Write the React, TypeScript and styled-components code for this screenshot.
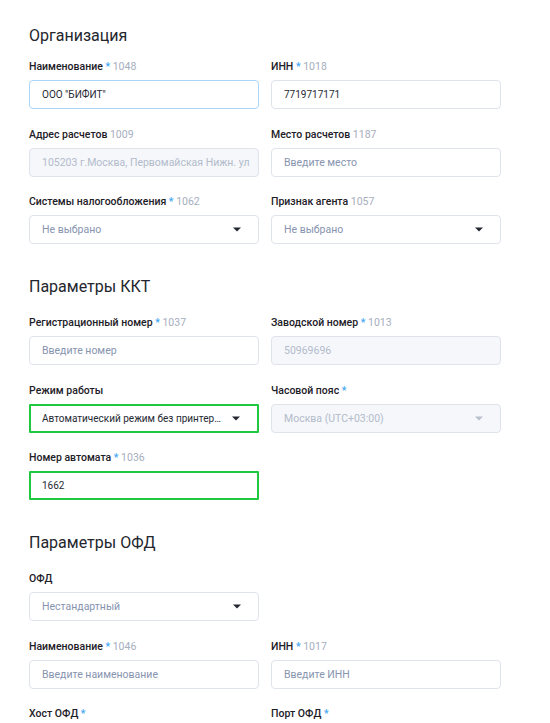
import styled, { createGlobalStyle, css } from "styled-components"

const GlobalStyle = createGlobalStyle`
  html, body {
    margin: 0;
    padding: 0;
    background: #ffffff;
  }

  body {
    font-family: Roboto, "Noto Sans", "Liberation Sans", sans-serif;
    color: #262a33;
    -webkit-font-smoothing: antialiased;
  }

  * {
    box-sizing: border-box;
  }
`

type FieldKind = "input" | "select"

interface FieldDef {
  label: string
  required?: boolean
  code?: string
  kind?: FieldKind
  value?: string
  placeholder?: string
  disabled?: boolean
  focused?: boolean
  highlighted?: boolean
}

interface SectionDef {
  title: string
  rows: FieldDef[][]
}

const sections: SectionDef[] = [
  {
    title: "Организация",
    rows: [
      [
        { label: "Наименование", required: true, code: "1048", value: 'ООО "БИФИТ"', focused: true },
        { label: "ИНН", required: true, code: "1018", value: "7719717171" },
      ],
      [
        {
          label: "Адрес расчетов",
          code: "1009",
          placeholder: "105203 г.Москва, Первомайская Нижн. ул",
          disabled: true,
        },
        { label: "Место расчетов", code: "1187", placeholder: "Введите место" },
      ],
      [
        { label: "Системы налогообложения", required: true, code: "1062", kind: "select", placeholder: "Не выбрано" },
        { label: "Признак агента", code: "1057", kind: "select", placeholder: "Не выбрано" },
      ],
    ],
  },
  {
    title: "Параметры ККТ",
    rows: [
      [
        { label: "Регистрационный номер", required: true, code: "1037", placeholder: "Введите номер" },
        { label: "Заводской номер", required: true, code: "1013", placeholder: "50969696", disabled: true },
      ],
      [
        {
          label: "Режим работы",
          kind: "select",
          value: "Автоматический режим без принтер…",
          highlighted: true,
        },
        { label: "Часовой пояс", required: true, kind: "select", placeholder: "Москва (UTC+03:00)", disabled: true },
      ],
      [{ label: "Номер автомата", required: true, code: "1036", value: "1662", highlighted: true }],
    ],
  },
  {
    title: "Параметры ОФД",
    rows: [
      [{ label: "ОФД", kind: "select", placeholder: "Нестандартный" }],
      [
        { label: "Наименование", required: true, code: "1046", placeholder: "Введите наименование" },
        { label: "ИНН", required: true, code: "1017", placeholder: "Введите ИНН" },
      ],
      [
        { label: "Хост ОФД", required: true, placeholder: "Введите хост" },
        { label: "Порт ОФД", required: true, placeholder: "Введите порт" },
      ],
    ],
  },
]

function Arrow({ disabled }: { disabled?: boolean }) {
  return (
    <ArrowIcon width="8" height="5" viewBox="0 0 8 5" aria-hidden>
      <path d="M0 0.5h8L4 4.6z" fill={disabled ? "#b9c0cc" : "#23272f"} />
    </ArrowIcon>
  )
}

function Field({ field }: { field: FieldDef }) {
  const state = {
    $disabled: field.disabled,
    $focused: field.focused,
    $highlighted: field.highlighted,
  }

  return (
    <FieldBox>
      <Label>
        {field.label}
        {field.required && <Required> *</Required>}
        {field.code && <Code> {field.code}</Code>}
      </Label>
      {field.kind === "select" ? (
        <SelectBox {...state}>
          <SelectText $placeholder={!field.value} $disabled={field.disabled}>
            {field.value ?? field.placeholder}
          </SelectText>
          <Arrow disabled={field.disabled} />
        </SelectBox>
      ) : (
        <TextInput
          {...state}
          readOnly
          disabled={field.disabled}
          defaultValue={field.value}
          placeholder={field.placeholder}
        />
      )}
    </FieldBox>
  )
}

export default function App() {
  return (
    <>
      <GlobalStyle />
      <Page>
        {sections.map((section, i) => (
          <Section key={section.title}>
            <SectionTitle $first={i === 0}>{section.title}</SectionTitle>
            <Grid>
              {section.rows.map((row, r) => (
                <Row key={r}>
                  {row.map((field) => (
                    <Field key={field.label + (field.code ?? "")} field={field} />
                  ))}
                </Row>
              ))}
            </Grid>
          </Section>
        ))}
      </Page>
    </>
  )
}

const Page = styled.div`
  width: 550px;
  padding: 24px 29px 40px;
`

const Section = styled.section`
  & + & {
    margin-top: 31px;
  }
`

const SectionTitle = styled.h2<{ $first?: boolean }>`
  margin: ${(p) => (p.$first ? "0 0 10px" : "1px 0 15px")};
  font-size: 16px;
  line-height: 24px;
  font-weight: 400;
  color: #23262d;
`

const Grid = styled.div`
  display: flex;
  flex-direction: column;
  gap: 16.5px;
`

const Row = styled.div`
  display: grid;
  grid-template-columns: 230px 230px;
  column-gap: 12px;
`

const FieldBox = styled.div`
  display: flex;
  flex-direction: column;
  gap: 6px;
`

const Label = styled.div`
  padding-top: 1px;
  font-size: 10.5px;
  line-height: 15px;
  font-weight: 500;
  color: #1d2027;
  white-space: nowrap;
`

const Required = styled.span`
  color: #3fa6f2;
`

const Code = styled.span`
  font-weight: 400;
  color: #a6aebe;
`

interface BoxState {
  $disabled?: boolean
  $focused?: boolean
  $highlighted?: boolean
}

const boxStyles = css<BoxState>`
  width: 230px;
  height: 29px;
  margin: 0;
  border-radius: 4px;
  font-family: Roboto, "Noto Sans", "Liberation Sans", sans-serif;
  font-size: 10px;
  color: #262a33;
  background: ${(p) => (p.$disabled ? "#f5f7fb" : "#ffffff")};
  border: 1px solid #dfe3ec;
  padding: 0 4px 0 12px;

  ${(p) =>
    p.$focused &&
    css`
      border-color: #a9d5f8;
    `}

  ${(p) =>
    p.$highlighted &&
    css`
      border: 2px solid #1fc83c;
      padding-left: 11px;
      border-radius: 1px;
    `}
`

const TextInput = styled.input<BoxState>`
  ${boxStyles};
  display: block;
  outline: none;

  &::placeholder {
    font-size: 10.5px;
    color: ${(p) => (p.$disabled ? "#b3bbca" : "#8794af")};
    opacity: 1;
  }

  &:disabled {
    opacity: 1;
  }
`

const SelectBox = styled.div<BoxState>`
  ${boxStyles};
  display: flex;
  align-items: center;
  justify-content: space-between;
  gap: 7px;
  padding-right: 17px;
  cursor: pointer;
`

const SelectText = styled.span<{ $placeholder?: boolean; $disabled?: boolean }>`
  flex: 1;
  min-width: 0;
  overflow: hidden;
  white-space: nowrap;
  text-overflow: ellipsis;
  font-size: ${(p) => (p.$placeholder ? "10.5px" : "10px")};
  color: ${(p) => (p.$disabled ? "#b3bbca" : p.$placeholder ? "#8794af" : "#262a33")};
`

const ArrowIcon = styled.svg`
  flex: none;
  display: block;
`
